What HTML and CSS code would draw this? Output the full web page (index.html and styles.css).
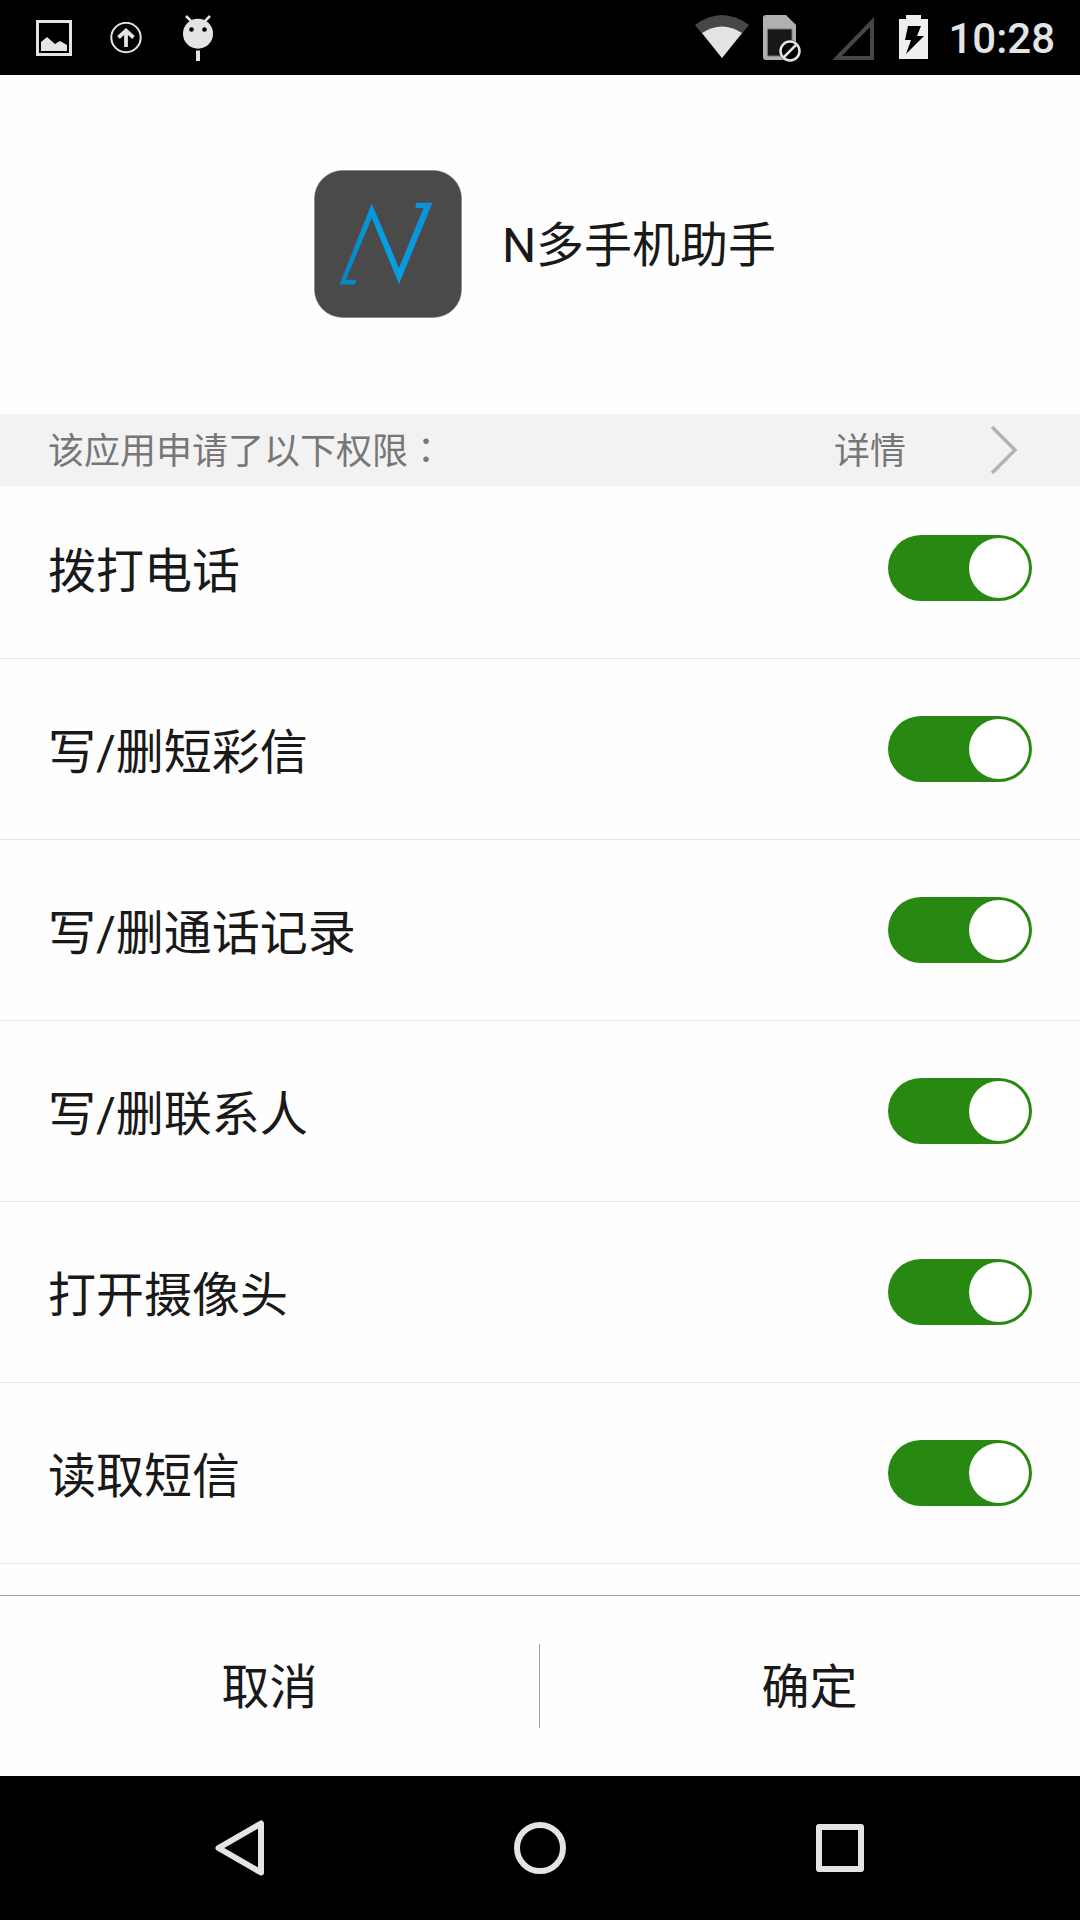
FILE: index.html
```html
<!DOCTYPE html>
<html lang="zh-CN">
<head>
<meta charset="utf-8">
<meta name="viewport" content="width=device-width, initial-scale=1">
<title>N多手机助手</title>
<link rel="stylesheet" href="styles.css">
</head>
<body>
<header class="status">
  <div class="status-left">
    <svg width="36" height="36" viewBox="0 0 36 36" aria-hidden="true"><rect x="1.5" y="1.5" width="33" height="33" fill="none" stroke="#e4e4e4" stroke-width="3"/><path d="M5 31V22L11 17L19 24L24 21L31 25V31Z" fill="#e4e4e4"/></svg>
    <svg width="32" height="32" viewBox="0 0 32 32" aria-hidden="true" fill="none" stroke="#e4e4e4"><circle cx="16" cy="15.500" r="14.700" stroke-width="2"/><path d="M16 25V9M8.500 15.500L16 8.500L23.500 15.500" stroke-width="3.800"/></svg>
    <svg width="36" height="48" viewBox="-3 0 36 48" aria-hidden="true"><path d="M3 2L8 7M27 2L22 7" stroke="#e4e4e4" stroke-width="2.500"/><circle cx="15" cy="19.700" r="15" fill="#e4e4e4"/><circle cx="8.500" cy="15.500" r="2.300"/><circle cx="21.500" cy="15.500" r="2.300"/><path d="M13 36.500H17V47H13Z" fill="#e4e4e4"/></svg>
  </div>
  <div class="status-right">
    <svg width="54" height="48" viewBox="0 0 54 48" aria-hidden="true"><path d="M0 11Q27 -9 54 11L27 44Z" fill="#464646"/><path d="M7 19Q27 6 47 19L27 44Z" fill="#e4e4e4"/></svg>
    <svg class="sim" width="38" height="48" viewBox="0 0 38 48" aria-hidden="true"><path d="M3 1H23L33 11V43Q33 46 30 46H3Q0 46 0 43V4Q0 1 3 1Z" fill="#afb0b2"/><path d="M4.500 15H29V42H4.500Z" fill="#181818" stroke="#777" stroke-width="1"/><circle cx="27" cy="37" r="11" fill="#181818"/><circle cx="27" cy="37" r="9.500" fill="#000" stroke="#e4e4e4" stroke-width="2.500"/><path d="M21 43L33 31" stroke="#e4e4e4" stroke-width="2.500"/></svg>
    <svg class="signal" width="42" height="48" viewBox="0 0 42 48" aria-hidden="true"><path d="M5 44L40 8V44Z" fill="none" stroke="#464646" stroke-width="4"/></svg>
    <svg class="battery" width="29" height="48" viewBox="0 0 29 48" aria-hidden="true"><path d="M0 5H7V1H22V5H29V45H0Z" fill="#eee"/><path d="M9 12H22L18 22H25L7 40L12 26H6Z" fill="#000"/></svg>
    <time class="clock">10:28</time>
  </div>
</header>
<main class="main">
  <section class="app">
    <svg width="168" height="168" viewBox="0 0 168 168" aria-hidden="true">
      <defs><linearGradient id="blue" x1="0" x2="1"><stop offset="0" stop-color="#0784c0"/><stop offset=".5" stop-color="#04a0e6"/><stop offset="1" stop-color="#0a92d2"/></linearGradient></defs>
      <rect x="10.500" y="10.500" width="147" height="147" rx="28" fill="#4a4a4a" stroke="#777" stroke-width=".5"/>
      <path d="M35.500 124.500L67.700 43.500L95 108L119.500 48H111.300L112.500 42.700H128.500L95 124L67.700 58L42 119.700H52L51 124.500Z" fill="url(#blue)"/>
    </svg>
    <h1 class="app-name">N多手机助手</h1>
  </section>
  <div class="strip">
    <span class="strip-text">该应用申请了以下权限<span class="colon" lang="zh-TW">：</span></span>
    <a class="details" href="#details"><span class="strip-text">详情</span>
      <svg width="28" height="50" viewBox="0 0 28 50" aria-hidden="true"><path d="M2 2L25 25L2 48" fill="none" stroke="#b2b2b2" stroke-width="3.500"/></svg>
    </a>
  </div>
  <ul class="list">
    <li><label class="row"><span class="row-text">拨打电话</span><input class="toggle" type="checkbox" checked></label></li>
    <li><label class="row"><span class="row-text">写/删短彩信</span><input class="toggle" type="checkbox" checked></label></li>
    <li><label class="row"><span class="row-text">写/删通话记录</span><input class="toggle" type="checkbox" checked></label></li>
    <li><label class="row"><span class="row-text">写/删联系人</span><input class="toggle" type="checkbox" checked></label></li>
    <li><label class="row"><span class="row-text">打开摄像头</span><input class="toggle" type="checkbox" checked></label></li>
    <li><label class="row"><span class="row-text">读取短信</span><input class="toggle" type="checkbox" checked></label></li>
  </ul>
</main>
<div class="actions">
  <button class="action" type="button">取消</button>
  <span class="divider"></span>
  <button class="action" type="button">确定</button>
</div>
<nav class="nav">
  <button class="key" type="button" aria-label="返回"><svg width="60" height="60" viewBox="0 0 60 60"><path d="M8.500 30L51 5.500V54.500Z" fill="none" stroke="#e4e4e4" stroke-width="6" stroke-linejoin="round"/></svg></button>
  <button class="key" type="button" aria-label="主页"><svg width="60" height="60" viewBox="0 0 60 60"><circle cx="30" cy="30" r="23" fill="none" stroke="#e4e4e4" stroke-width="6"/></svg></button>
  <button class="key" type="button" aria-label="最近任务"><svg width="60" height="60" viewBox="0 0 60 60"><path d="M9 9H51V51H9Z" fill="none" stroke="#e4e4e4" stroke-width="6" stroke-linejoin="round"/></svg></button>
</nav>
</body>
</html>
```
FILE: styles.css
```css
* {
  box-sizing: border-box;
}

body {
  margin: 0;
  min-height: 100vh;
  display: flex;
  flex-direction: column;
  background: #fefefe;
  color: #191919;
  font-family: Roboto, "Noto Sans CJK SC", sans-serif;
  font-size: 48px;
  line-height: 72px;
}

svg {
  display: block;
  flex: none;
}

button {
  border: 0;
  padding: 0;
  background: none;
  color: inherit;
  font: inherit;
}

.status {
  display: flex;
  justify-content: space-between;
  align-items: center;
  height: 75px;
  padding: 1px 25px 0 36px;
  background: #000;
}

.status-left,
.status-right {
  display: flex;
  align-items: center;
}

.status-left {
  gap: 38px;
}

.sim {
  margin-left: 14px;
}

.signal {
  margin-left: 31px;
}

.battery {
  margin-left: 25px;
}

.clock {
  margin-left: 20px;
  padding-top: 2px;
  color: #e4e4e4;
  font-size: 42px;
  font-weight: 500;
  line-height: 48px;
}

.main {
  flex: 1;
}

.app {
  display: flex;
  justify-content: center;
  align-items: center;
  gap: 30px;
  padding: 85px 0 86px;
}

.app-name {
  margin: 0;
  padding-top: 4px;
  font-size: 48px;
  font-weight: 400;
}

.strip {
  display: flex;
  justify-content: space-between;
  align-items: center;
  height: 72px;
  padding: 0 62px 0 48px;
  background: #f2f2f2;
  color: #777;
  font-size: 36px;
  line-height: 48px;
}

.strip-text {
  padding-top: 4px;
}

.colon {
  font-family: "Noto Sans CJK TC", sans-serif;
  line-height: 1;
}

.details {
  display: flex;
  align-items: center;
  gap: 84px;
  color: inherit;
  text-decoration: none;
}

.list {
  margin: 0;
  padding: 0;
  overflow: hidden;
  list-style: none;
}

.list li {
  border-bottom: 1px solid #e5e5e5;
}

.list li:first-child {
  margin-top: -8px;
}

.row {
  display: flex;
  justify-content: space-between;
  align-items: center;
  height: 180px;
  padding: 0 48px;
}

.row-text {
  padding-top: 8px;
}

.toggle {
  appearance: none;
  display: flex;
  justify-content: flex-end;
  width: 144px;
  height: 66px;
  margin: 0;
  padding: 3px;
  border-radius: 33px;
  background: #288912;
}

.toggle::before {
  content: "";
  width: 60px;
  height: 60px;
  border-radius: 50%;
  background: #fff;
}

.toggle:not(:checked) {
  justify-content: flex-start;
  background: #bbb;
}

.actions {
  display: flex;
  align-items: center;
  height: 181px;
  padding-right: 1px;
  border-top: 1px solid #a0a0a0;
}

.action {
  flex: 1;
  align-self: stretch;
  padding-top: 4px;
}

.divider {
  width: 1px;
  height: 84px;
  background: #a0a0a0;
}

.nav {
  display: flex;
  height: 144px;
  padding: 0 90px;
  background: #000;
}

.key {
  flex: 1;
  display: flex;
  justify-content: center;
  align-items: center;
}
```
